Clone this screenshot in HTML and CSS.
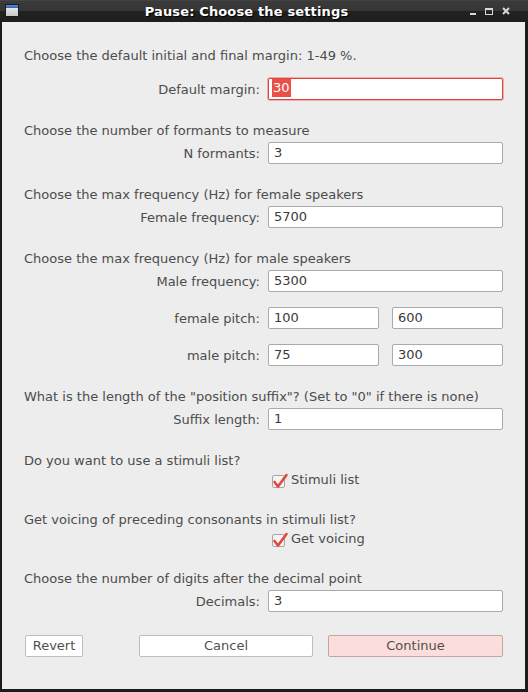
FILE: index.html
```html
<!DOCTYPE html>
<html>
<head>
<meta charset="utf-8">
<link rel="stylesheet" href="styles.css">
</head>
<body>
<div class="window">
  <div class="titlebar">
    <div class="app-icon"><div class="app-icon-bar"></div></div>
    <div class="title">Pause: Choose the settings</div>
    <div class="wm-buttons">
      <span class="wm-min"></span>
      <span class="wm-max"></span>
      <svg class="wm-close" width="8" height="8" viewBox="0 0 8 8"><path d="M1 1 L7 7 M7 1 L1 7" stroke="#d8d8d8" stroke-width="2"/></svg>
    </div>
  </div>
  <div class="content">
    <div class="heading first">Choose the default initial and final margin: 1-49 %.</div>
    <div class="row first-input">
      <label class="lbl">Default margin:</label>
      <div class="field focused"><span class="sel">30</span></div>
    </div>

    <div class="heading">Choose the number of formants to measure</div>
    <div class="row">
      <label class="lbl">N formants:</label>
      <div class="field">3</div>
    </div>

    <div class="heading">Choose the max frequency (Hz) for female speakers</div>
    <div class="row">
      <label class="lbl">Female frequency:</label>
      <div class="field">5700</div>
    </div>

    <div class="heading">Choose the max frequency (Hz) for male speakers</div>
    <div class="row">
      <label class="lbl">Male frequency:</label>
      <div class="field">5300</div>
    </div>
    <div class="row follow">
      <label class="lbl">female pitch:</label>
      <div class="pair"><div class="field">100</div><div class="field">600</div></div>
    </div>
    <div class="row follow">
      <label class="lbl">male pitch:</label>
      <div class="pair"><div class="field">75</div><div class="field">300</div></div>
    </div>

    <div class="heading">What is the length of the "position suffix"? (Set to "0" if there is none)</div>
    <div class="row">
      <label class="lbl">Suffix length:</label>
      <div class="field">1</div>
    </div>

    <div class="heading">Do you want to use a stimuli list?</div>
    <div class="row check-row">
      <span></span>
      <div class="check">
        <span class="box"><svg width="18" height="17" viewBox="0 0 18 17"><path d="M3.5 9 L7 13.5 L15.5 2" fill="none" stroke="#e5473e" stroke-width="2.6" stroke-linecap="round" stroke-linejoin="round"/></svg></span>
        <span>Stimuli list</span>
      </div>
    </div>

    <div class="heading after-check">Get voicing of preceding consonants in stimuli list?</div>
    <div class="row check-row">
      <span></span>
      <div class="check">
        <span class="box"><svg width="18" height="17" viewBox="0 0 18 17"><path d="M3.5 9 L7 13.5 L15.5 2" fill="none" stroke="#e5473e" stroke-width="2.6" stroke-linecap="round" stroke-linejoin="round"/></svg></span>
        <span>Get voicing</span>
      </div>
    </div>

    <div class="heading after-check">Choose the number of digits after the decimal point</div>
    <div class="row">
      <label class="lbl">Decimals:</label>
      <div class="field">3</div>
    </div>

    <div class="buttons">
      <div class="btn revert">Revert</div>
      <div class="btn cancel">Cancel</div>
      <div class="btn continue">Continue</div>
    </div>
  </div>
</div>
</body>
</html>
```

FILE: styles.css
```css
html, body {
  margin: 0;
  padding: 0;
  background: #1c1c1c;
}
.window {
  width: 528px;
  height: 692px;
  display: flex;
  flex-direction: column;
  background: #1c1c1c;
  font-family: "DejaVu Sans", sans-serif;
  font-size: 13px;
  color: #4c4c4c;
}
.titlebar {
  height: 22px;
  flex: none;
  display: flex;
  align-items: center;
  background: linear-gradient(#4a4a4a 0px, #3a3a3a 1px, #353535 11px, #222222 11px, #1e1e1e 22px);
}
.app-icon {
  width: 14px;
  height: 13px;
  margin-left: 5px;
  margin-top: -1px;
  border: 1px solid #1a1a1a;
  box-sizing: border-box;
  background: linear-gradient(#f2f2f2, #c8c8c8);
  display: flex;
  flex-direction: column;
}
.app-icon-bar {
  height: 3px;
  background: linear-gradient(#5a8ad6, #2f62b4);
}
.title {
  flex: 1;
  text-align: center;
  color: #ffffff;
  font-weight: bold;
  font-size: 13px;
  text-shadow: 1px 1px 1px #000;
  letter-spacing: 0.15px;
  padding-left: 4px;
}
.wm-buttons {
  display: flex;
  align-items: center;
  gap: 9px;
  margin-right: 10px;
  width: 48px;
}
.wm-min {
  width: 6px;
  height: 2px;
  margin-top: 6px;
  background: #d8d8d8;
}
.wm-max {
  width: 6px;
  height: 4px;
  border: 1px solid #d8d8d8;
  border-top-width: 2px;
}
.content {
  flex: 1;
  margin: 0 3px 3px 2px;
  background: #ededed;
  padding: 0 22px 0 22px;
  display: flex;
  flex-direction: column;
}
.heading {
  line-height: 16px;
  height: 16px;
  margin-top: 23px;
  white-space: nowrap;
}
.heading.first {
  margin-top: 26px;
}
.heading.after-check {
  margin-top: 24px;
}
.row {
  display: grid;
  grid-template-columns: 236px 235px;
  column-gap: 8px;
  align-items: center;
  margin-top: 3px;
}
.row.first-input {
  margin-top: 14px;
}
.row.follow {
  margin-top: 15px;
}
.lbl {
  text-align: right;
  white-space: nowrap;
}
.field {
  height: 22px;
  box-sizing: border-box;
  background: #ffffff;
  border: 1px solid #aaaaaa;
  border-radius: 2px;
  padding-left: 5px;
  line-height: 20px;
  color: #3a3a3a;
}
.field.focused {
  border: 1px solid #e0433b;
  box-shadow: 0 0 0 1px rgba(224, 67, 59, 0.35);
  padding-left: 3px;
}
.sel {
  display: inline-block;
  background: #e8514a;
  color: #ffffff;
  line-height: 18px;
  padding: 0 1px;
  vertical-align: 1px;
}
.pair {
  display: grid;
  grid-template-columns: 1fr 1fr;
  column-gap: 13px;
}
.check-row {
  height: 16px;
}
.check {
  display: flex;
  align-items: center;
  gap: 6px;
  padding-left: 4px;
  line-height: 16px;
}
.box {
  width: 13px;
  height: 13px;
  box-sizing: border-box;
  border: 1px solid #a6a6a6;
  border-radius: 2px;
  background: #f4f4f4;
  position: relative;
  margin-top: 2px;
}
.box svg {
  position: absolute;
  left: -2px;
  top: -3px;
}
.buttons {
  display: flex;
  margin-top: 23px;
  padding-left: 1px;
}
.btn {
  height: 22px;
  box-sizing: border-box;
  border: 1px solid #bdbdbd;
  border-radius: 2px;
  background: #ffffff;
  text-align: center;
  line-height: 20px;
  color: #505050;
}
.revert {
  width: 58px;
}
.cancel {
  width: 174px;
  margin-left: 56px;
}
.continue {
  width: 175px;
  margin-left: 15px;
  background: #fbdddb;
  border-color: #c4a4a2;
}
```
